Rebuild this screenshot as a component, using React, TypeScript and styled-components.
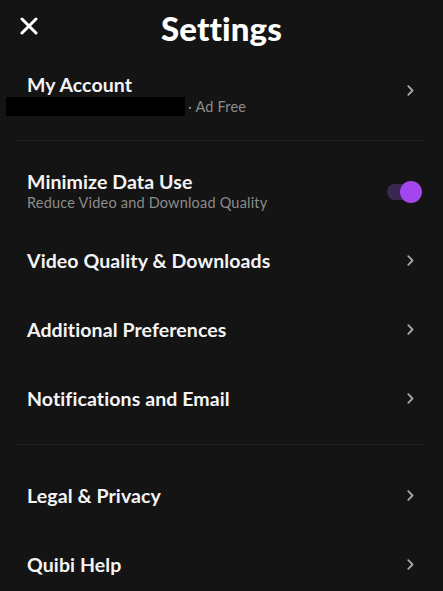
import React from "react";
import styled, { createGlobalStyle } from "styled-components";

const GlobalStyle = createGlobalStyle`
  html, body {
    margin: 0;
    padding: 0;
    background: #141414;
  }
  body {
    font-family: "Lato", "Noto Sans", sans-serif;
    color: #f2f2f2;
  }
`;

const Screen = styled.div`
  width: 443px;
  height: 591px;
  overflow: hidden;
  background: #141414;
`;

const Header = styled.header`
  height: 56px;
  display: grid;
  grid-template-columns: 1fr auto 1fr;
  align-items: center;
`;

const CloseButton = styled.button`
  justify-self: start;
  margin-left: 20px;
  margin-top: -4px;
  width: 18px;
  height: 18px;
  padding: 0;
  border: none;
  background: none;
  display: flex;
`;

const Title = styled.h1`
  margin: 0;
  font-size: 33px;
  font-weight: 900;
  letter-spacing: 0.1px;
  color: #ffffff;
`;

const AccountBlock = styled.div`
  height: 84px;
  display: flex;
  align-items: center;
  justify-content: space-between;
  padding: 0 29px 6px 27px;
  box-sizing: border-box;
`;

const TextStack = styled.div`
  display: flex;
  flex-direction: column;
`;

const Label = styled.div`
  font-size: 19.5px;
  font-weight: 700;
  line-height: 22px;
  letter-spacing: 0.1px;
  color: #f4f4f4;
`;

const Sub = styled.div<{ $offset?: number }>`
  display: flex;
  align-items: center;
  font-size: 14.5px;
  line-height: 19px;
  letter-spacing: 0.2px;
  color: #8c8c8c;
  margin-top: ${(p) => p.$offset ?? 0}px;
`;

const Redacted = styled.span`
  display: inline-block;
  width: 179px;
  height: 19px;
  background: #000;
  margin-left: -21px;
  margin-right: 3px;
`;

const Divider = styled.hr<{ $after: number; $before: number }>`
  margin: ${(p) => p.$before}px 19px ${(p) => p.$after}px 18px;
  border: none;
  height: 1px;
  background: #222222;
`;

const Row = styled.div<{ $right?: number }>`
  height: 69px;
  display: flex;
  align-items: center;
  justify-content: space-between;
  padding: 0 ${(p) => p.$right ?? 29}px 0 27px;
`;

const ChevronSlot = styled.span<{ $lift?: number }>`
  display: flex;
  margin-bottom: ${(p) => p.$lift ?? 0}px;
`;

const Toggle = styled.div`
  position: relative;
  width: 35px;
  height: 22px;
  display: flex;
  align-items: center;
`;

const Track = styled.div`
  width: 26px;
  height: 16px;
  border-radius: 8px;
  background: #3b2750;
`;

const Knob = styled.div`
  position: absolute;
  right: 0;
  top: 0;
  width: 22px;
  height: 22px;
  border-radius: 50%;
  background: #a346ee;
`;

const Chevron = ({ lift }: { lift?: number }) => (
  <ChevronSlot $lift={lift}>
    <svg width="7" height="11" viewBox="0 0 7 11">
      <path
        d="M1.3 1.2 L5.5 5.5 L1.3 9.8"
        fill="none"
        stroke="#a8a8a8"
        strokeWidth="1.8"
        strokeLinecap="round"
        strokeLinejoin="round"
      />
    </svg>
  </ChevronSlot>
);

const CloseIcon = () => (
  <svg width="18" height="18" viewBox="0 0 18 18">
    <path
      d="M2 2 L16 16 M16 2 L2 16"
      stroke="#ffffff"
      strokeWidth="3"
      strokeLinecap="round"
    />
  </svg>
);

const NavRow = ({ label }: { label: string }) => (
  <Row>
    <Label>{label}</Label>
    <Chevron />
  </Row>
);

export default function App() {
  return (
    <Screen>
      <GlobalStyle />
      <Header>
        <CloseButton aria-label="Close">
          <CloseIcon />
        </CloseButton>
        <Title>Settings</Title>
        <span />
      </Header>

      <AccountBlock>
        <TextStack>
          <Label>My Account</Label>
          <Sub $offset={1}>
            <Redacted />· Ad Free
          </Sub>
        </TextStack>
        <Chevron lift={9} />
      </AccountBlock>

      <Divider $before={0} $after={16} />

      <Row $right={21}>
        <TextStack>
          <Label>Minimize Data Use</Label>
          <Sub>Reduce Video and Download Quality</Sub>
        </TextStack>
        <Toggle>
          <Track />
          <Knob />
        </Toggle>
      </Row>
      <NavRow label="Video Quality & Downloads" />
      <NavRow label="Additional Preferences" />
      <NavRow label="Notifications and Email" />

      <Divider $before={11} $after={16} />

      <NavRow label="Legal & Privacy" />
      <NavRow label="Quibi Help" />
    </Screen>
  );
}
